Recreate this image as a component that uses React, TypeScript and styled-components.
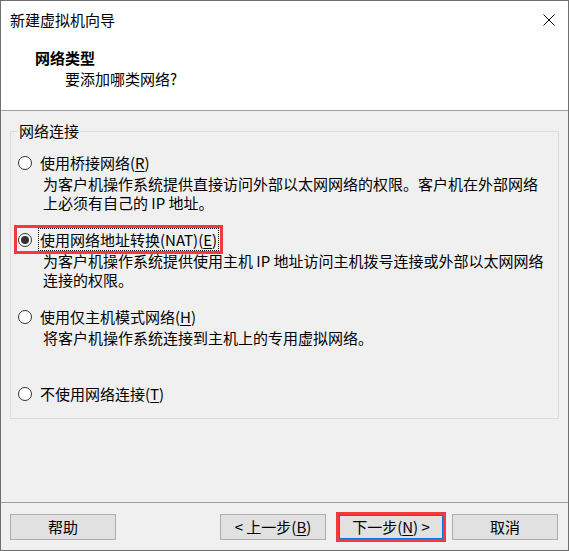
import React from "react";
import styled, { createGlobalStyle } from "styled-components";

const Global = createGlobalStyle`
  html, body { margin: 0; padding: 0; background: #ffffff; }
  body { font-family: "Noto Sans CJK SC", "Noto Sans", sans-serif; color: #000; }
  * { box-sizing: border-box; }
`;

const Window = styled.div`
  width: 569px;
  height: 551px;
  border: 1px solid #707070;
  background: #f0f0f0;
  display: flex;
  flex-direction: column;
  font-size: 15px;
`;

const TopArea = styled.div`
  height: 110px;
  background: #ffffff;
  border-bottom: 1px solid #a0a0a0;
  display: flex;
  flex-direction: column;
`;

const TitleBar = styled.div`
  height: 37px;
  display: flex;
  align-items: center;
  justify-content: space-between;
  padding: 0 13px 0 9px;
`;

const TitleText = styled.span`
  font-size: 15px;
  line-height: 20px;
`;

const CloseBox = styled.span`
  width: 12px;
  height: 12px;
  display: flex;
`;

const Heading = styled.div`
  margin-top: 9px;
  padding-left: 34px;
  font-weight: bold;
  line-height: 21px;
`;

const SubHeading = styled.div`
  padding-left: 64px;
  line-height: 21px;
`;

const Body = styled.div`
  flex: 1;
  padding: 20px 9px 0 9px;
`;

const GroupBox = styled.div`
  position: relative;
  height: 288px;
  border: 1px solid #dcdcdc;
  padding-top: 19px;
`;

const GroupLabel = styled.span`
  position: absolute;
  top: -11px;
  left: 7px;
  padding: 0 1px;
  line-height: 20px;
  background: #f0f0f0;
`;

const Block = styled.div`
  height: 77px;
`;

const OptionRow = styled.div<{ $marked?: boolean }>`
  display: inline-flex;
  align-items: center;
  height: 23px;
  margin-left: 6px;
  padding-right: 1px;
  outline: ${(p) => (p.$marked ? "3px solid #f2393b" : "none")};
`;

const Radio = styled.span<{ $checked?: boolean }>`
  position: relative;
  width: 14px;
  height: 14px;
  margin-left: 1px;
  border-radius: 50%;
  border: 1px solid #333333;
  background: #ffffff;
  flex-shrink: 0;
  &::after {
    content: "";
    display: ${(p) => (p.$checked ? "block" : "none")};
    position: absolute;
    left: 2px;
    top: 2px;
    width: 8px;
    height: 8px;
    border-radius: 50%;
    background: #333333;
  }
`;

const OptionLabel = styled.span<{ $focused?: boolean }>`
  margin-left: 6px;
  padding: 0 1px;
  line-height: 21px;
  border: 1px ${(p) => (p.$focused ? "dotted #000" : "solid transparent")};
  white-space: nowrap;
`;

const Desc = styled.div`
  padding-left: 32px;
  line-height: 19px;
  white-space: nowrap;
`;

const Footer = styled.div`
  height: 48px;
  border-top: 1px solid #a0a0a0;
  display: flex;
  align-items: flex-start;
  padding: 11px 10px 0 9px;
`;

const Spacer = styled.div`
  flex: 1;
`;

const Button = styled.button<{ $primary?: boolean; $marked?: boolean; $gap?: number }>`
  width: 106px;
  height: 26px;
  margin-left: ${(p) => p.$gap ?? 0}px;
  padding: 0;
  font-family: "Noto Sans CJK SC", "Noto Sans", sans-serif;
  font-size: 15px;
  line-height: 20px;
  color: #000;
  background: #e1e1e1;
  border: ${(p) => (p.$primary ? "2px solid #0078d7" : "1px solid #adadad")};
  outline: ${(p) => (p.$marked ? "3px solid #f2393b" : "none")};
  outline-offset: -1px;
`;

const Key = styled.u`
  text-underline-offset: 2px;
`;

const CloseIcon = () => (
  <svg width="12" height="12" viewBox="0 0 12 12">
    <path d="M0.5 0.5 L11.5 11.5 M11.5 0.5 L0.5 11.5" stroke="#000" strokeWidth="1" fill="none" />
  </svg>
);

type Opt = {
  label: React.ReactNode;
  desc: string[];
  checked?: boolean;
};

const options: Opt[] = [
  {
    label: (
      <>
        使用桥接网络(<Key>R</Key>)
      </>
    ),
    desc: [
      "为客户机操作系统提供直接访问外部以太网网络的权限。客户机在外部网络",
      "上必须有自己的 IP 地址。",
    ],
  },
  {
    label: (
      <>
        使用网络地址转换(NAT)(<Key>E</Key>)
      </>
    ),
    desc: [
      "为客户机操作系统提供使用主机 IP 地址访问主机拨号连接或外部以太网网络",
      "连接的权限。",
    ],
    checked: true,
  },
  {
    label: (
      <>
        使用仅主机模式网络(<Key>H</Key>)
      </>
    ),
    desc: ["将客户机操作系统连接到主机上的专用虚拟网络。"],
  },
  {
    label: (
      <>
        不使用网络连接(<Key>T</Key>)
      </>
    ),
    desc: [],
  },
];

export default function App() {
  return (
    <>
      <Global />
      <Window>
        <TopArea>
          <TitleBar>
            <TitleText>新建虚拟机向导</TitleText>
            <CloseBox>
              <CloseIcon />
            </CloseBox>
          </TitleBar>
          <Heading>网络类型</Heading>
          <SubHeading>要添加哪类网络?</SubHeading>
        </TopArea>
        <Body>
          <GroupBox>
            <GroupLabel>网络连接</GroupLabel>
            {options.map((o, i) => (
              <Block key={i}>
                <OptionRow $marked={o.checked}>
                  <Radio $checked={o.checked} />
                  <OptionLabel $focused={o.checked}>{o.label}</OptionLabel>
                </OptionRow>
                {o.desc.map((d, j) => (
                  <Desc key={j}>{d}</Desc>
                ))}
              </Block>
            ))}
          </GroupBox>
        </Body>
        <Footer>
          <Button>帮助</Button>
          <Spacer />
          <Button>
            &lt; 上一步(<Key>B</Key>)
          </Button>
          <Button $primary $marked $gap={12}>
            下一步(<Key>N</Key>) &gt;
          </Button>
          <Button $gap={8}>取消</Button>
        </Footer>
      </Window>
    </>
  );
}
